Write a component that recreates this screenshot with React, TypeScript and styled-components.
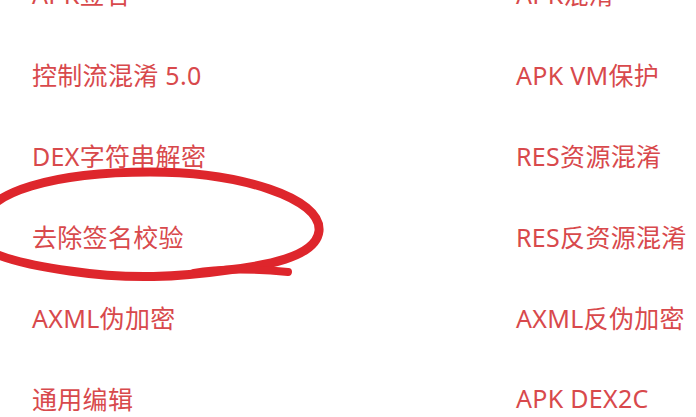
import React from 'react'
import styled, { createGlobalStyle } from 'styled-components'

const GlobalStyle = createGlobalStyle`
  html, body {
    margin: 0;
    padding: 0;
    background: #ffffff;
  }
  body {
    font-family: 'Noto Sans', 'Noto Sans CJK SC', sans-serif;
  }
`

const Page = styled.div`
  position: relative;
  width: 696px;
  height: 417px;
  overflow: hidden;
  background: #ffffff;
`

const Menu = styled.div`
  display: grid;
  grid-template-columns: 484px 1fr;
  grid-auto-rows: 81px;
  padding-left: 32px;
  margin-top: -48px;
`

const Item = styled.div`
  display: flex;
  align-items: center;
  font-size: 25px;
  color: #d8494c;
  white-space: nowrap;
  letter-spacing: 0.3px;
`

const Scribble = styled.svg`
  position: absolute;
  left: 0;
  top: 0;
  pointer-events: none;
`

const items: [string, string][] = [
  ['APK签名', 'APK混淆'],
  ['控制流混淆 5.0', 'APK VM保护'],
  ['DEX字符串解密', 'RES资源混淆'],
  ['去除签名校验', 'RES反资源混淆'],
  ['AXML伪加密', 'AXML反伪加密'],
  ['通用编辑', 'APK DEX2C'],
]

const App: React.FC = () => {
  return (
    <Page>
      <GlobalStyle />
      <Menu>
        {items.map(([left, right]) => (
          <React.Fragment key={left}>
            <Item>{left}</Item>
            <Item>{right}</Item>
          </React.Fragment>
        ))}
      </Menu>
      <Scribble width="696" height="417" viewBox="0 0 696 417">
        <path
          d="M -20 230 C -20 190, 60 172, 150 172 C 240 172, 322 198, 319 231 C 316 258, 262 266, 228 270 C 180 277, 130 280, 70 271 C 20 264, -10 255, -20 244"
          fill="none"
          stroke="#de262c"
          strokeWidth="9"
          strokeLinecap="round"
        />
        <path
          d="M 288 272 C 255 269, 220 268, 194 273"
          fill="none"
          stroke="#de262c"
          strokeWidth="8"
          strokeLinecap="round"
        />
      </Scribble>
    </Page>
  )
}

export default App
